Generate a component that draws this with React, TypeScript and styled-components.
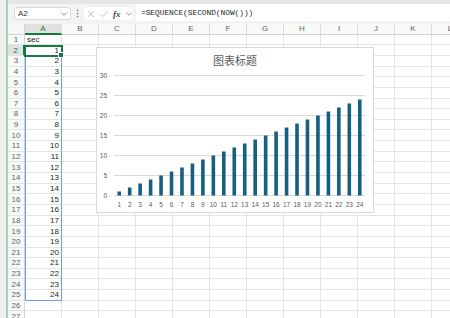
import React from "react";
import styled, { createGlobalStyle } from "styled-components";

const GlobalStyle = createGlobalStyle`
  html, body { margin: 0; padding: 0; background: #fff; }
  body { font-family: "Liberation Sans", Arial, sans-serif; }
`;

const Window = styled.div`
  width: 450px;
  height: 318px;
  overflow: hidden;
  display: flex;
  background: #fff;
`;

const LeftStrip = styled.div`
  width: 6px;
  flex: none;
  background: #eef1ee;
  border-right: 2px solid #a8d0b4;
`;

const Main = styled.div`
  flex: 1;
  min-width: 0;
  display: flex;
  flex-direction: column;
`;

const RibbonEdge = styled.div`
  height: 4px;
  flex: none;
  background: #e6e6e6;
`;

const FormulaBar = styled.div`
  height: 20px;
  flex: none;
  box-sizing: border-box;
  background: #f3f3f3;
  display: flex;
  align-items: flex-start;
  padding-left: 6px;
`;

const NameBox = styled.div`
  margin-top: 3px;
  width: 57px;
  height: 13px;
  box-sizing: border-box;
  background: #fff;
  border: 1px solid #dadada;
  border-radius: 3px;
  display: flex;
  align-items: center;
  justify-content: space-between;
  padding: 0 3px 0 3px;
  font-size: 8px;
  color: #333;
`;

const Dots = styled.div`
  width: 13px;
  margin-top: 3px;
  height: 13px;
  display: flex;
  align-items: center;
  justify-content: center;
  font-size: 9px;
  color: #777;
  font-weight: bold;
`;

const FuncBox = styled.div`
  margin-top: 3px;
  width: 49px;
  height: 13px;
  box-sizing: border-box;
  background: #fff;
  border-radius: 3px;
  display: flex;
  align-items: center;
  gap: 5px;
  padding-left: 3px;
`;

const Fx = styled.span`
  font-family: "Liberation Serif", "Times New Roman", serif;
  font-style: italic;
  font-weight: bold;
  font-size: 9px;
  color: #444;
`;

const FormulaInput = styled.div`
  margin-left: 3px;
  flex: 1;
  height: 17px;
  background: #fff;
  border-radius: 3px 0 0 3px;
  display: flex;
  align-items: center;
  padding-left: 5px;
  font-family: "Liberation Mono", "Courier New", monospace;
  font-size: 7.8px;
  color: #222;
`;

const Sheet = styled.div`
  position: relative;
  flex: 1;
  display: grid;
  grid-template-columns: 17px repeat(12, 37px);
  grid-template-rows: 10.7px repeat(27, 10.65px);
  overflow: hidden;
`;

const Corner = styled.div`
  box-sizing: border-box;
  background: #f7f7f7;
  border-right: 1px solid #d4d4d4;
  border-bottom: 1px solid #d4d4d4;
`;

const ColHeader = styled.div<{ $active?: boolean }>`
  box-sizing: border-box;
  display: flex;
  align-items: center;
  justify-content: center;
  font-size: 8px;
  background: ${(p) => (p.$active ? "#e1e1e1" : "#f9f9f9")};
  color: ${(p) => (p.$active ? "#107c41" : "#616161")};
  border-right: 1px solid #dcdcdc;
  border-bottom: ${(p) => (p.$active ? "2px solid #107c41" : "1px solid #d4d4d4")};
`;

const RowHeader = styled.div<{ $active?: boolean }>`
  box-sizing: border-box;
  display: flex;
  align-items: center;
  justify-content: center;
  font-size: 8px;
  background: ${(p) => (p.$active ? "#e1e1e1" : "#f9f9f9")};
  color: ${(p) => (p.$active ? "#107c41" : "#616161")};
  border-right: ${(p) => (p.$active ? "2px solid #107c41" : "1px solid #d4d4d4")};
  border-bottom: 1px solid #e4e4e4;
`;

const Cell = styled.div<{ $align?: "left" | "right" }>`
  box-sizing: border-box;
  display: flex;
  align-items: center;
  justify-content: ${(p) => (p.$align === "right" ? "flex-end" : "flex-start")};
  padding: 0 2px;
  font-size: 8px;
  color: #222;
  border-right: 1px solid #e4e4e4;
  border-bottom: 1px solid #e4e4e4;
  white-space: nowrap;
  overflow: hidden;
`;

const SpillBorder = styled.div`
  position: absolute;
  left: 17px;
  top: 21.35px;
  width: 37px;
  height: 255.6px;
  box-sizing: border-box;
  border: 1px solid #6f9fd8;
  pointer-events: none;
`;

const ActiveCell = styled.div`
  position: absolute;
  left: 16px;
  top: 20.6px;
  width: 39px;
  height: 12.4px;
  box-sizing: border-box;
  border: 2px solid #107c41;
  pointer-events: none;
`;

const FillHandle = styled.div`
  position: absolute;
  right: -3px;
  bottom: -3px;
  width: 4px;
  height: 4px;
  background: #107c41;
  border: 1px solid #fff;
`;

const ChartBox = styled.div`
  position: absolute;
  left: 88px;
  top: 23px;
  width: 276px;
  height: 164px;
  background: #fff;
  border: 1px solid #d9d9d9;
`;

const cols = ["A", "B", "C", "D", "E", "F", "G", "H", "I", "J", "K", "L"];

const Chevron = ({ color = "#777" }: { color?: string }) => (
  <svg width="6" height="4" viewBox="0 0 6 4">
    <path d="M0.5 0.8 L3 3.2 L5.5 0.8" fill="none" stroke={color} strokeWidth="0.9" />
  </svg>
);

const Chart = () => {
  const left = 17;
  const right = 268;
  const zero = 147.5;
  const unit = 4;
  const step = (right - left) / 24;
  const ticks = [0, 5, 10, 15, 20, 25, 30];
  const data = Array.from({ length: 24 }, (_, i) => i + 1);
  return (
    <svg width="276" height="164" viewBox="0 0 276 164">
      <text
        x="138"
        y="12"
        textAnchor="middle"
        dominantBaseline="central"
        fontSize="11"
        fill="#595959"
        fontFamily='"Noto Sans CJK SC", sans-serif'
      >
        图表标题
      </text>
      {ticks.map((t) => (
        <g key={t}>
          <line x1={left} x2={right} y1={zero - t * unit} y2={zero - t * unit} stroke="#d9d9d9" strokeWidth="1" />
          <text
            x="10"
            y={zero - t * unit}
            textAnchor="end"
            dominantBaseline="central"
            fontSize="6.5"
            fill="#595959"
            fontFamily='"Liberation Sans", Arial, sans-serif'
          >
            {t}
          </text>
        </g>
      ))}
      {data.map((v, i) => {
        const cx = left + (i + 0.5) * step;
        return (
          <g key={v}>
            <rect x={cx - 1.8} y={zero - v * unit} width="3.6" height={v * unit} fill="#156082" />
            <text
              x={cx}
              y="156"
              textAnchor="middle"
              dominantBaseline="central"
              fontSize="6.5"
              fill="#595959"
              fontFamily='"Liberation Sans", Arial, sans-serif'
            >
              {v}
            </text>
          </g>
        );
      })}
    </svg>
  );
};

export default function App() {
  const rows = Array.from({ length: 27 }, (_, i) => i + 1);
  return (
    <>
      <GlobalStyle />
      <Window>
        <LeftStrip />
        <Main>
          <RibbonEdge />
          <FormulaBar>
            <NameBox>
              <span>A2</span>
              <Chevron />
            </NameBox>
            <Dots>⋮</Dots>
            <FuncBox>
              <svg width="8" height="8" viewBox="0 0 8 8">
                <path d="M1 1 L7 7 M7 1 L1 7" stroke="#bdbdbd" strokeWidth="0.9" />
              </svg>
              <svg width="8" height="8" viewBox="0 0 8 8">
                <path d="M0.8 4.3 L3 6.5 L7.4 1.5" fill="none" stroke="#bdbdbd" strokeWidth="0.9" />
              </svg>
              <Fx>fx</Fx>
              <Chevron color="#888" />
            </FuncBox>
            <FormulaInput>=SEQUENCE(SECOND(NOW()))</FormulaInput>
          </FormulaBar>
          <Sheet>
            <Corner />
            {cols.map((c) => (
              <ColHeader key={c} $active={c === "A"}>
                {c}
              </ColHeader>
            ))}
            {rows.map((r) => (
              <React.Fragment key={r}>
                <RowHeader $active={r === 2}>{r}</RowHeader>
                {cols.map((c) => {
                  let content: React.ReactNode = null;
                  let align: "left" | "right" = "left";
                  if (c === "A" && r === 1) content = "sec";
                  if (c === "A" && r >= 2 && r <= 25) {
                    content = r - 1;
                    align = "right";
                  }
                  return (
                    <Cell key={c} $align={align}>
                      {content}
                    </Cell>
                  );
                })}
              </React.Fragment>
            ))}
            <SpillBorder />
            <ActiveCell>
              <FillHandle />
            </ActiveCell>
            <ChartBox>
              <Chart />
            </ChartBox>
          </Sheet>
        </Main>
      </Window>
    </>
  );
}
